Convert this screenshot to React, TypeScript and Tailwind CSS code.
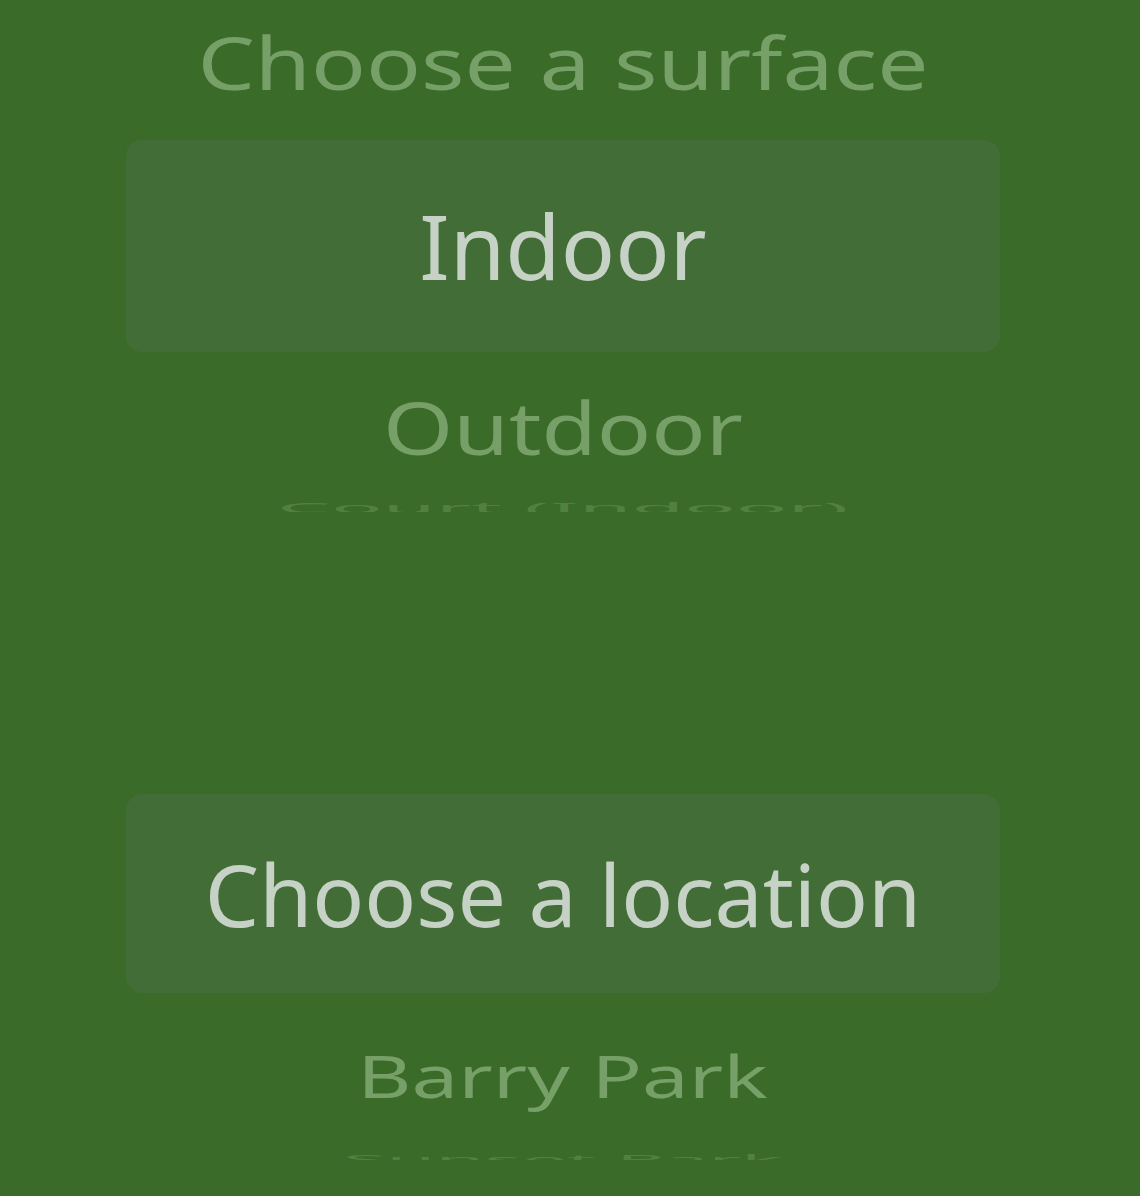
import React from 'react';

const font = "font-['Noto_Sans','Open_Sans',sans-serif]";

export default function App() {
  return (
    <div className={`min-h-screen bg-[#3a6b29] ${font} pl-[126px] pr-[140px]`}>
      {/* Surface picker */}
      <div className="h-[512px] overflow-hidden flex flex-col">
        <div className="h-[140px] shrink-0 pt-[17px] flex justify-center">
          <span className="block h-[90px] text-[90px] leading-none text-[#76a068] whitespace-nowrap scale-x-[1.01] scale-y-[0.81]">
            Choose a surface
          </span>
        </div>
        <div className="h-[212px] shrink-0 rounded-[16px] bg-[#436d36] pt-[60px] flex justify-center">
          <span className="block h-[90px] text-[90px] leading-none text-[#c6d2c6] whitespace-nowrap">Indoor</span>
        </div>
        <div className="h-[120px] shrink-0 pt-[30px] flex justify-center">
          <span className="block h-[90px] text-[90px] leading-none text-[#76a068] whitespace-nowrap scale-y-[0.81]">
            Outdoor
          </span>
        </div>
        <div className="-mt-[9px] shrink-0 flex justify-center">
          <span className="block h-[90px] text-[90px] leading-none text-[#52813f] whitespace-nowrap scale-x-[0.95] scale-y-[0.15]">
            Court (Indoor)
          </span>
        </div>
      </div>

      <div className="h-[282px]" />

      {/* Location picker */}
      <div className="h-[366px] overflow-hidden flex flex-col">
        <div className="h-[199px] shrink-0 rounded-[16px] bg-[#436d36] pt-[57px] flex justify-center">
          <span className="block h-[86px] text-[86px] leading-none text-[#c6d2c6] whitespace-nowrap">
            Choose a location
          </span>
        </div>
        <div className="h-[120px] shrink-0 pt-[40px] flex justify-center">
          <span className="block h-[86px] text-[86px] leading-none text-[#76a068] whitespace-nowrap scale-x-[0.97] scale-y-[0.68]">
            Barry Park
          </span>
        </div>
        <div className="mt-[3px] shrink-0 flex justify-center">
          <span className="block h-[86px] text-[86px] leading-none text-[#52813f] whitespace-nowrap scale-x-[0.92] scale-y-[0.15]">
            Sunset Park
          </span>
        </div>
      </div>
    </div>
  );
}
